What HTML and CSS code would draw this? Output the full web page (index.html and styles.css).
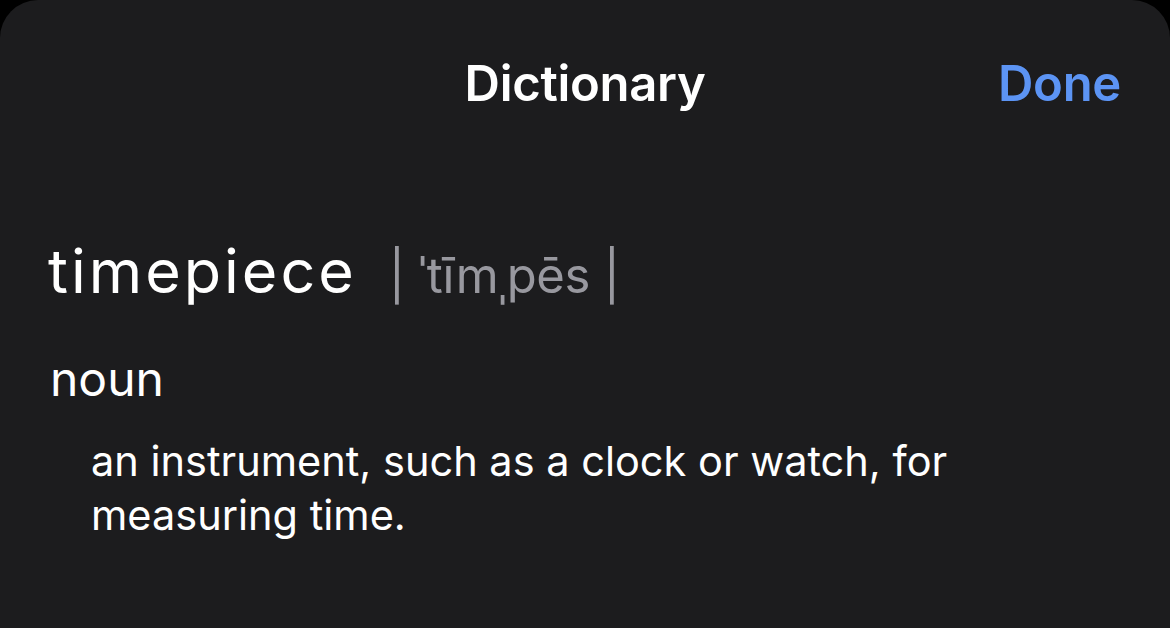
FILE: index.html
```html
<!DOCTYPE html>
<html lang="en">
<head>
<meta charset="utf-8">
<title>Dictionary</title>
<link rel="stylesheet" href="styles.css">
</head>
<body>
<div class="sheet">
  <header class="nav">
    <div class="nav-side"></div>
    <h1 class="nav-title">Dictionary</h1>
    <div class="nav-side nav-right"><button class="done">Done</button></div>
  </header>
  <main class="entry">
    <div class="headline">
      <span class="word">timepiece</span>
      <span class="pron">| ˈtīmˌpēs |</span>
    </div>
    <div class="pos">noun</div>
    <p class="def">an instrument, such as a clock or watch, for measuring time.</p>
  </main>
</div>
</body>
</html>
```
FILE: styles.css
```css
html, body {
  margin: 0;
  padding: 0;
  background: #000;
  height: 100%;
}
body {
  font-family: Inter, "Noto Sans", "Liberation Sans", sans-serif;
  color: #fff;
  overflow: hidden;
}
.sheet {
  background: #1c1c1e;
  height: 628px;
  border-radius: 38px 38px 0 0;
}
.nav {
  display: grid;
  grid-template-columns: 1fr auto 1fr;
  align-items: center;
  padding: 49px 49px 0 49px;
  height: 70px;
}
.nav-title {
  margin: 0;
  font-size: 49px;
  font-weight: 600;
  line-height: 70px;
  letter-spacing: -0.3px;
}
.nav-right {
  display: flex;
  justify-content: flex-end;
}
.done {
  background: none;
  border: none;
  padding: 0;
  font-family: inherit;
  font-size: 49px;
  font-weight: 600;
  line-height: 70px;
  color: #5c94f4;
  letter-spacing: -0.3px;
}
.entry {
  padding: 0 48px;
}
.headline {
  display: flex;
  align-items: baseline;
  gap: 32px;
  margin-top: 112px;
  height: 80px;
}
.word {
  font-size: 61px;
  line-height: 80px;
  letter-spacing: 3px;
}
.pron {
  font-size: 49px;
  color: #98989f;
  letter-spacing: -0.3px;
}
.pos {
  margin-top: 38px;
  font-size: 48px;
  line-height: 60px;
  padding-left: 2px;
}
.def {
  margin: 25px 0 0 43px;
  font-size: 41.5px;
  line-height: 54px;
  max-width: 900px;
}
```
